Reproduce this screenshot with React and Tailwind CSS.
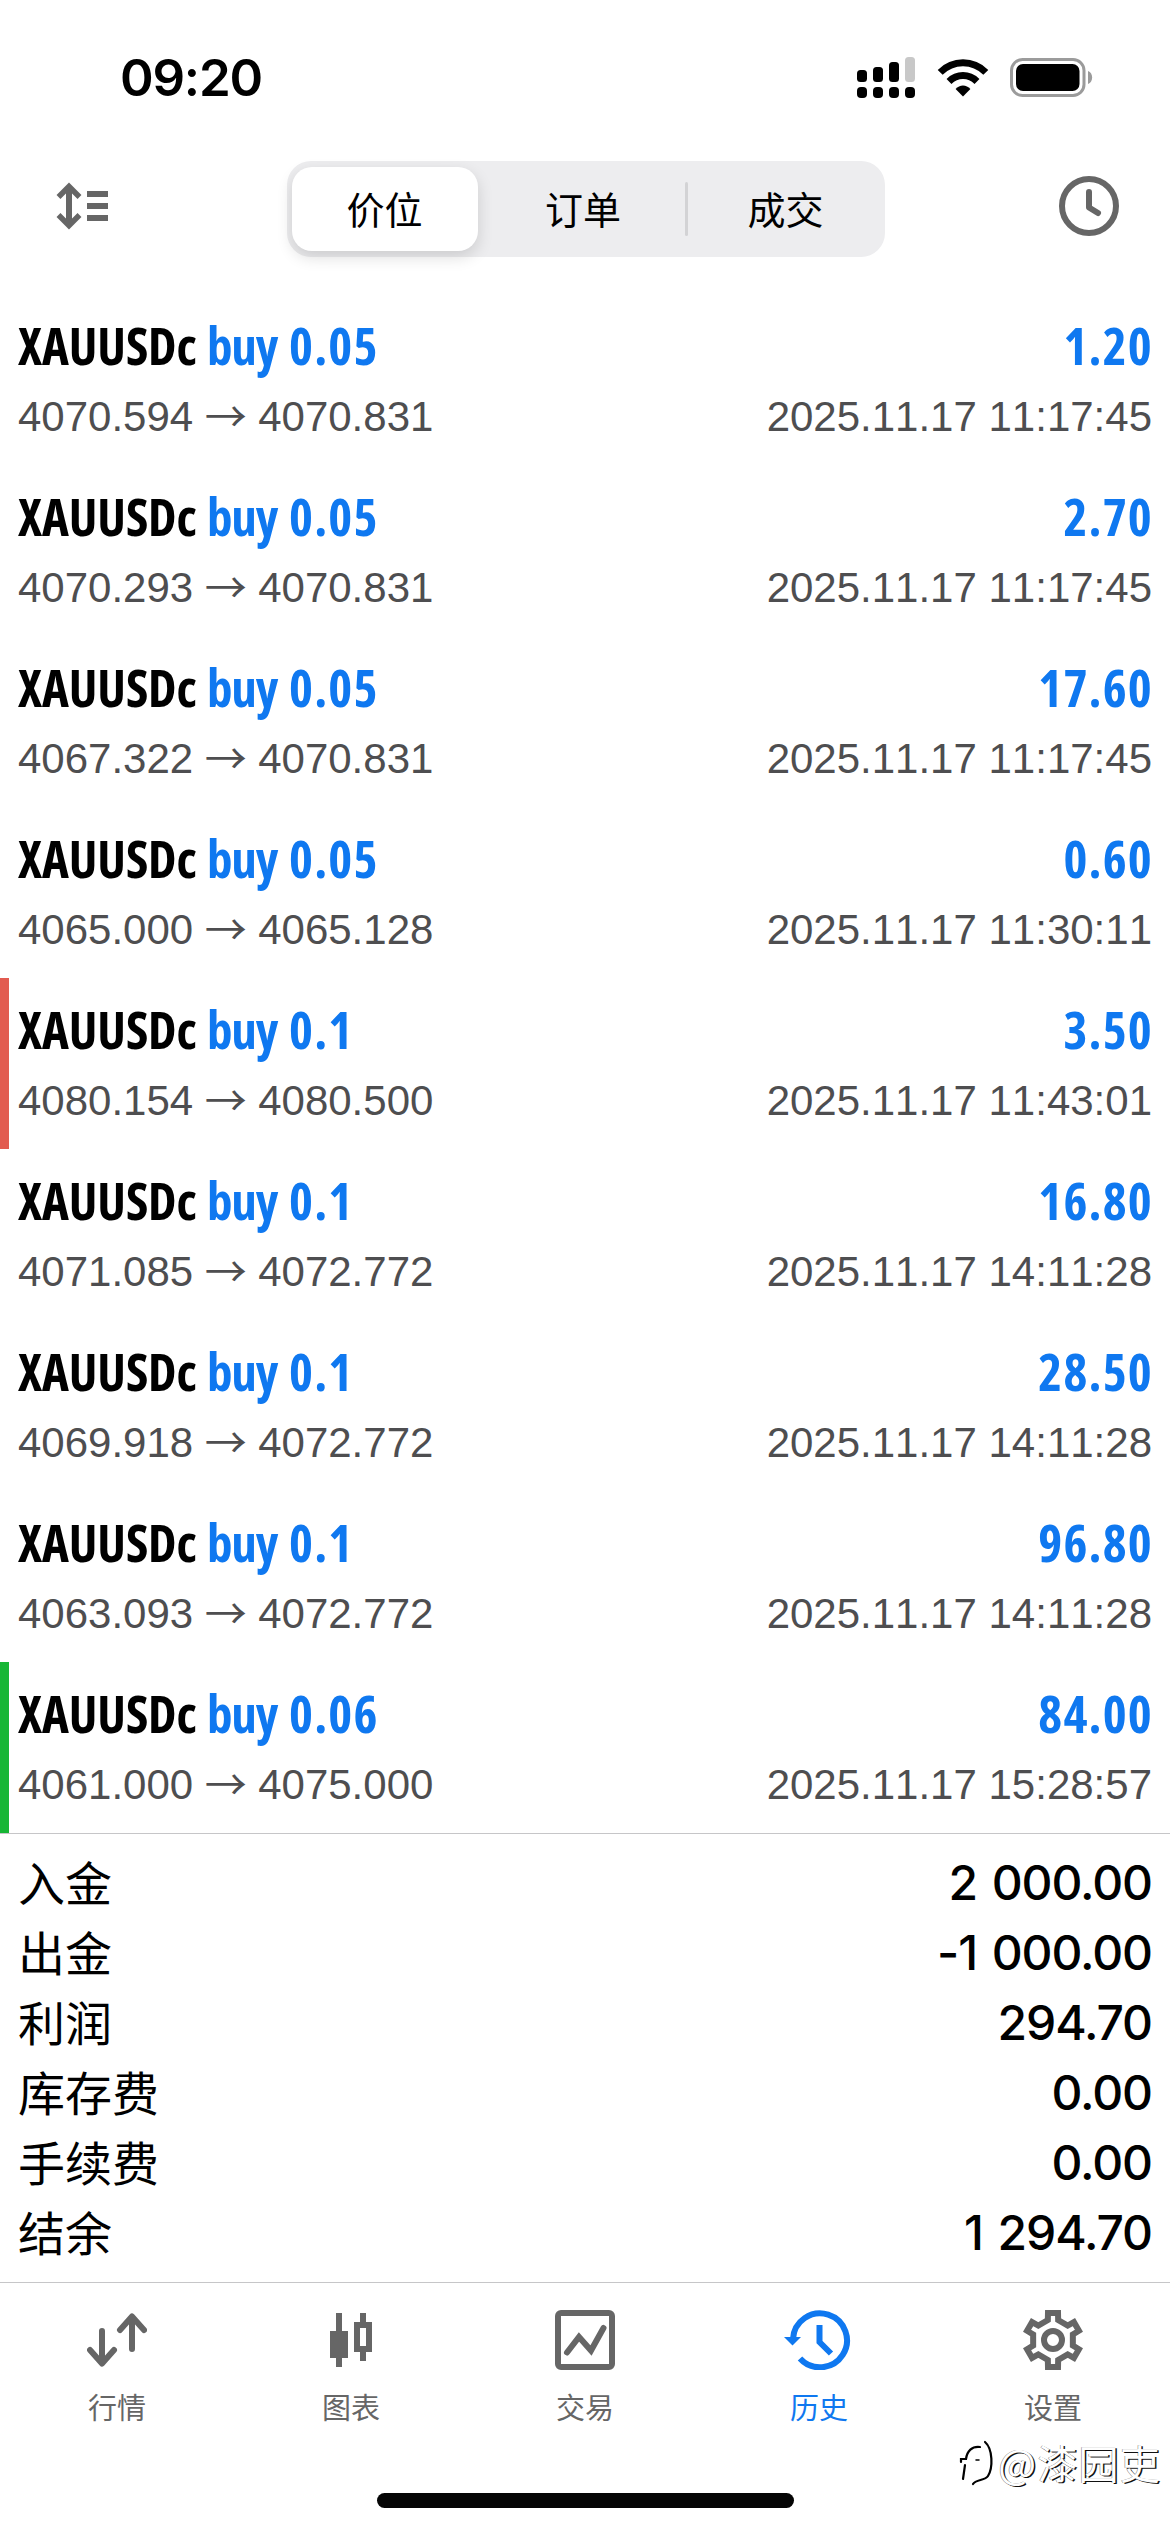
const trades = [
  { lot: '0.05', profit: '1.20', open: '4070.594', close: '4070.831', time: '2025.11.17 11:17:45' },
  { lot: '0.05', profit: '2.70', open: '4070.293', close: '4070.831', time: '2025.11.17 11:17:45' },
  { lot: '0.05', profit: '17.60', open: '4067.322', close: '4070.831', time: '2025.11.17 11:17:45' },
  { lot: '0.05', profit: '0.60', open: '4065.000', close: '4065.128', time: '2025.11.17 11:30:11' },
  { lot: '0.1', profit: '3.50', open: '4080.154', close: '4080.500', time: '2025.11.17 11:43:01', mark: 'border-[#e25b50]' },
  { lot: '0.1', profit: '16.80', open: '4071.085', close: '4072.772', time: '2025.11.17 14:11:28' },
  { lot: '0.1', profit: '28.50', open: '4069.918', close: '4072.772', time: '2025.11.17 14:11:28' },
  { lot: '0.1', profit: '96.80', open: '4063.093', close: '4072.772', time: '2025.11.17 14:11:28' },
  { lot: '0.06', profit: '84.00', open: '4061.000', close: '4075.000', time: '2025.11.17 15:28:57', mark: 'border-[#17b635]' },
];

const summary = [
  ['入金', '2 000.00'],
  ['出金', '-1 000.00'],
  ['利润', '294.70'],
  ['库存费', '0.00'],
  ['手续费', '0.00'],
  ['结余', '1 294.70'],
];

const polar = (r, deg) => {
  const a = (deg * Math.PI) / 180;
  return `${(30 + r * Math.cos(a)).toFixed(2)},${(30 + r * Math.sin(a)).toFixed(2)}`;
};
const gearPoints = [0, 60, 120, 180, 240, 300]
  .map((d) => [polar(20.6, d - 15.5), polar(20.6, d + 15.5), polar(27.5, d + 19.5), polar(27.5, d + 40.5)].join(' '))
  .join(' ');

function SignalIcon() {
  return (
    <svg width="59" height="42" viewBox="0 0 59 42">
      <rect x="0" y="13" width="10" height="12" rx="3.5" />
      <rect x="16" y="10" width="10" height="15" rx="3.5" />
      <rect x="32" y="5" width="10" height="20" rx="3.5" />
      <rect x="48" y="0" width="10" height="25" rx="3.5" fill="#c8c8c8" />
      <rect x="0" y="30" width="10" height="11" rx="4" />
      <rect x="16" y="30" width="10" height="11" rx="4" />
      <rect x="32" y="30" width="10" height="11" rx="4" />
      <rect x="48" y="30" width="10" height="11" rx="4" />
    </svg>
  );
}

function WifiIcon() {
  return (
    <svg width="52" height="38" viewBox="0 0 52 38">
      <g fill="none" stroke="#000" strokeWidth="7">
        <path d="M3.2 13.4 C16 .6 36 .6 48.8 13.4" />
        <path d="M12 22.4 C20 14.6 32 14.6 40 22.4" />
      </g>
      <path d="M26 37.5 L18.6 30 C22.6 25.2 29.4 25.2 33.4 30 Z" />
    </svg>
  );
}

function BatteryIcon() {
  return (
    <svg width="83" height="40" viewBox="0 0 83 40">
      <rect x="1.5" y="1.5" width="72.5" height="36" rx="11" fill="none" stroke="#9b9b9b" strokeWidth="3" />
      <rect x="6" y="6" width="63.5" height="27" rx="7" />
      <path d="M78 13 C83.5 15 83.5 24 78 26 Z" fill="#9b9b9b" />
    </svg>
  );
}

function SortIcon() {
  return (
    <svg width="52" height="48" viewBox="0 0 52 48" fill="none" stroke="#666" strokeWidth="6">
      <path d="M13 4.5 V43.5" />
      <path d="M2.5 15 L13 4.5 L23.5 15 M2.5 33 L13 43.5 L23.5 33" strokeWidth="5.5" />
      <path d="M31 12 H52 M31 24 H52 M31 36 H52" />
    </svg>
  );
}

function ClockIcon() {
  return (
    <svg width="60" height="60" viewBox="0 0 60 60" fill="none" stroke="#666" strokeWidth="6" strokeLinecap="round" strokeLinejoin="round">
      <circle cx="30" cy="30" r="27" />
      <path d="M30 16 V31.5 L39 37" />
    </svg>
  );
}

function QuotesIcon() {
  return (
    <svg width="60" height="60" viewBox="0 0 60 60" fill="none" stroke="#666" strokeWidth="6" strokeLinecap="round" strokeLinejoin="round">
      <path d="M15 21 V53 M3 40 L15 53.5 L27 40" />
      <path d="M45 39 V7 M33 20 L45 6.5 L57 20" />
    </svg>
  );
}

function CandlesIcon() {
  return (
    <svg width="60" height="60" viewBox="0 0 60 60">
      <g fill="#666">
        <rect x="15" y="3" width="6" height="54" />
        <rect x="9" y="21" width="18" height="27" />
        <path fillRule="evenodd" d="M39 3 H45 V12 H51 V42 H45 V51 H39 V42 H33 V12 H39 Z M39 18 V36 H45 V18 Z" />
      </g>
    </svg>
  );
}

function TradeIcon() {
  return (
    <svg width="60" height="60" viewBox="0 0 60 60" fill="none" stroke="#666" strokeWidth="6">
      <rect x="3" y="3" width="54" height="54" rx="3" />
      <path d="M12 42.5 L24 27 L36 40.5 L48.5 18" strokeLinecap="round" />
    </svg>
  );
}

function HistoryIcon() {
  return (
    <svg width="70" height="60" viewBox="0 0 70 60" fill="none" stroke="#0f78f0" strokeWidth="6">
      <path d="M9 29 A27 27 0 1 1 16 48.5" />
      <path d="M0 27 H17 L8.5 35.5 Z" fill="#0f78f0" stroke="none" />
      <path d="M35.5 15 V32 L47 43.5" />
    </svg>
  );
}

function SettingsIcon() {
  return (
    <svg width="60" height="60" viewBox="0 0 60 60" fill="none" stroke="#666" strokeWidth="6">
      <polygon points={gearPoints} />
      <circle cx="30" cy="30" r="9" />
    </svg>
  );
}

const tabs = [
  { label: '行情', Icon: QuotesIcon },
  { label: '图表', Icon: CandlesIcon },
  { label: '交易', Icon: TradeIcon },
  { label: '历史', Icon: HistoryIcon, active: true },
  { label: '设置', Icon: SettingsIcon },
];

function TradeRow({ lot, profit, open, close, time, mark }) {
  return (
    <div className={`h-[171px] border-l-[9px] pt-[21px] pl-[9px] pr-[18px] ${mark || 'border-transparent'}`}>
      <div className="flex h-[60px] justify-between font-['Open_Sans',sans-serif] text-[51px] leading-[60px] font-bold [font-stretch:75%]">
        <div className="flex whitespace-nowrap text-[#0f78f0]">
          <span className="w-[189px] tracking-[-0.1px] text-black">XAUUSDc</span>
          <span className="w-[82px] tracking-[-1.2px]">buy</span>
          <span className="tracking-[1.2px]">{lot}</span>
        </div>
        <span className="-mr-px tracking-[1.2px] text-[#0f78f0]">{profit}</span>
      </div>
      <div className="mt-3 flex h-[60px] justify-between font-['Liberation_Sans',sans-serif] text-[42px] leading-[60px] text-[#4e4e50] [font-kerning:none]">
        <div className="flex">
          <span>{open}</span>
          <span className="mx-[11.5px] w-[42px] text-center font-['Noto_Sans_CJK_SC'] leading-[54px]">→</span>
          <span>{close}</span>
        </div>
        <span>{time}</span>
      </div>
    </div>
  );
}

export default function App() {
  return (
    <div className="flex h-[2532px] w-[1170px] flex-col overflow-hidden bg-white font-['Inter','Noto_Sans_CJK_SC',sans-serif] text-black">
      <header className="flex h-[161px] items-start justify-between pt-[57px] pr-[77px] pl-[120px]">
        <div className="h-[42px] text-[51px] leading-[42px] font-semibold tracking-[-1.2px]">09:20</div>
        <div className="flex items-start">
          <SignalIcon />
          <span className="mt-[2px] ml-[21px]"><WifiIcon /></span>
          <span className="mt-[1px] ml-[21px]"><BatteryIcon /></span>
        </div>
      </header>

      <div className="flex h-[133px] items-start justify-between pr-[51px] pl-[56px]">
        <span className="mt-[21px]"><SortIcon /></span>
        <div className="ml-[4px] flex h-24 w-[598px] items-center rounded-[24px] bg-[#ededef] p-[5px] font-['Noto_Sans_CJK_SC',sans-serif] text-[38px] leading-[82px]">
          <div className="h-[84px] w-[186px] rounded-[20px] bg-white text-center shadow-[0_6px_16px_rgba(0,0,0,0.14)]">价位</div>
          <div className="h-[84px] w-[207px] pl-1 text-center">订单</div>
          <div className="h-[54px] w-[3px] rounded-full bg-[#d3d3d5]" />
          <div className="h-[84px] flex-1 pl-1 text-center">成交</div>
        </div>
        <span className="mt-[15px]"><ClockIcon /></span>
      </div>

      <main>
        {trades.map((t, i) => <TradeRow key={i} {...t} />)}
      </main>

      <section className="h-[449px] border-t border-[#c6c6c8] pt-[13px] pr-[18px] pl-[18px]">
        {summary.map(([label, value]) => (
          <div key={label} className="flex h-[70px] justify-between text-[48px] leading-[70px]">
            <span className="font-['Noto_Sans_CJK_SC',sans-serif] text-[47px] leading-[67px]">{label}</span>
            <span className="font-medium leading-[72px] tracking-[-1.1px] [word-spacing:3px]">{value}</span>
          </div>
        ))}
      </section>

      <nav className="grid h-[211px] grid-cols-5 border-t border-[#c6c6c8] pt-[27px]">
        {tabs.map(({ label, Icon, active }) => (
          <div key={label} className={`flex flex-col items-center font-['Noto_Sans_CJK_SC',sans-serif] text-[29px] leading-[40px] ${active ? 'text-[#0f78f0]' : 'text-[#666]'}`}>
            <Icon />
            <span className="mt-[16px]">{label}</span>
          </div>
        ))}
      </nav>

      <footer className="relative h-[39px]">
        <div className="mx-auto h-[15px] w-[417px] rounded-full bg-[#050505]" />
        <div className="absolute right-[9px] bottom-[43px] flex items-center font-['Noto_Sans_CJK_SC',sans-serif] text-[40px] leading-[54px] tracking-[1.2px] text-white [text-shadow:1.5px_1px_0_#111,-0.5px_0_0_#777]">
          <svg width="40" height="50" viewBox="0 0 38 50" fill="none" stroke="#000" strokeLinecap="round">
            <path d="M4 42 L6 28 M2 25 V22 H7 C8 14 13 9 21 10" strokeWidth="2.2" />
            <path d="M26 5 C34 12 34 31 29 39 C26 44 17 42 14 47" strokeWidth="2.2" />
            <path d="M17 23 H20" strokeWidth="1.5" />
          </svg>
          <span>@漆园吏</span>
        </div>
      </footer>
    </div>
  );
}
